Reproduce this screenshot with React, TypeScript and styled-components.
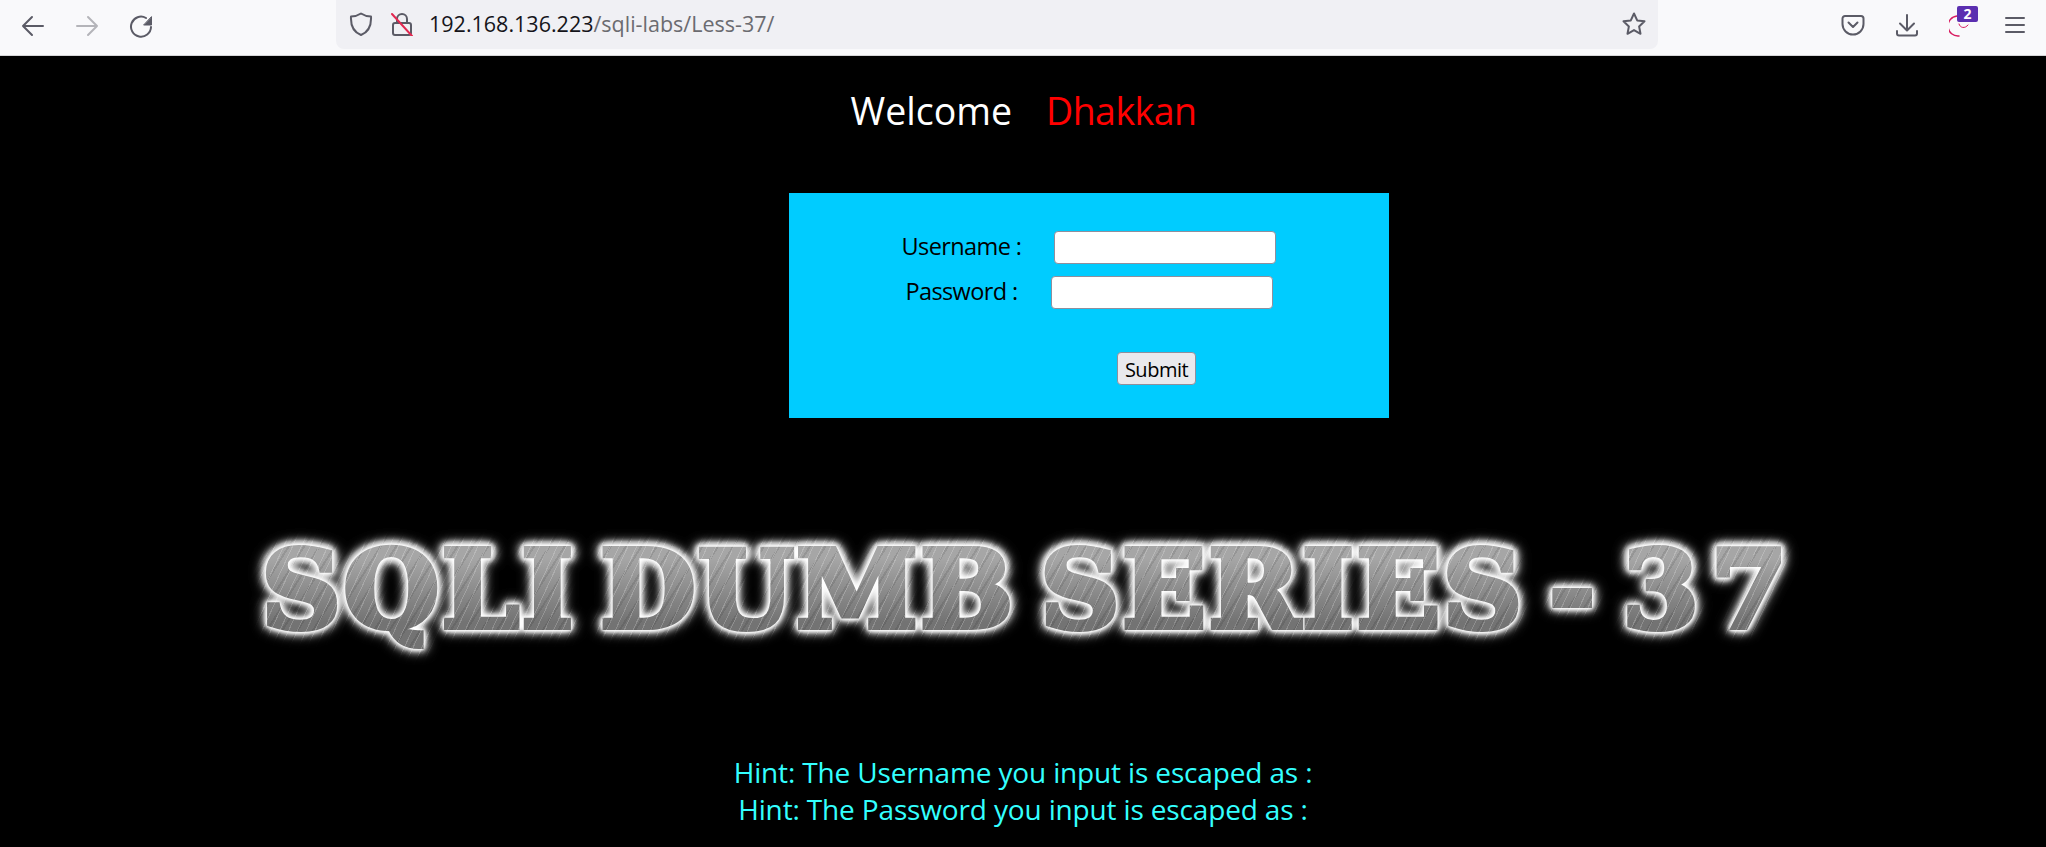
import React from "react";
import styled, { createGlobalStyle } from "styled-components";

const GlobalStyle = createGlobalStyle`
  html, body {
    margin: 0;
    background: #000;
    font-family: "Open Sans", "Noto Sans", sans-serif;
  }
`;

const Page = styled.div`
  width: 2046px;
  height: 847px;
  overflow: hidden;
  display: flex;
  flex-direction: column;
  background: #000;
`;

const Toolbar = styled.header`
  height: 55px;
  flex: none;
  display: flex;
  align-items: flex-start;
  background: #f9f9fb;
  border-bottom: 1px solid #d6d6d8;
`;

const NavGroup = styled.nav`
  width: 336px;
  height: 52px;
  display: flex;
  align-items: center;
  padding-left: 21px;
  gap: 30px;
  box-sizing: border-box;
`;

const UrlBar = styled.div`
  width: 1322px;
  height: 49px;
  flex: none;
  display: flex;
  align-items: center;
  box-sizing: border-box;
  padding: 0 12px 2px 13px;
  background: #f0f0f4;
  border-radius: 0 0 8px 8px;
`;

const LockSlot = styled.span`
  margin-left: 17px;
  display: inline-flex;
`;

const UrlText = styled.div`
  margin-left: 15px;
  flex: 1;
  font-size: 21.5px;
  color: #15141a;
  white-space: nowrap;
`;

const UrlPath = styled.span`
  color: #6b6b70;
`;

const ActionGroup = styled.div`
  flex: 1;
  height: 50px;
  display: flex;
  align-items: center;
  padding-left: 183px;
  gap: 30px;
`;

const IconBox = styled.span`
  position: relative;
  display: inline-flex;
  width: 24px;
  height: 24px;
  flex: none;
`;

const Badge = styled.span`
  position: absolute;
  left: 8px;
  top: -7px;
  width: 21px;
  height: 16px;
  background: #5b2fb0;
  border-radius: 2px;
  color: #fff;
  font-size: 14px;
  font-weight: 700;
  line-height: 16px;
  text-align: center;
`;

const Content = styled.main`
  flex: 1;
  display: flex;
  flex-direction: column;
  align-items: center;
`;

const Welcome = styled.div`
  margin: 30px 0 0 1px;
  display: flex;
  gap: 34px;
  font-size: 37.5px;
  line-height: 50px;
`;

const WelcomeWord = styled.span<{ $tone: string; $tight?: boolean }>`
  color: ${(props) => props.$tone};
  letter-spacing: ${(props) => (props.$tight ? "-0.55px" : "0")};
`;

const LoginBox = styled.form`
  margin: 57px 0 0 132px;
  width: 600px;
  height: 225px;
  box-sizing: border-box;
  padding-top: 38px;
  background: #00ccff;
  display: flex;
  flex-direction: column;
`;

const FieldRow = styled.div`
  height: 33px;
  margin-bottom: 12px;
  display: flex;
  justify-content: center;
  align-items: center;
  gap: 33px;
`;

const FieldLabel = styled.label`
  font-size: 23.5px;
  letter-spacing: -0.6px;
  padding-bottom: 3px;
  color: #000;
`;

const TextInput = styled.input`
  width: 222px;
  height: 33px;
  box-sizing: border-box;
  background: #fff;
  border: 1px solid #8f8f9d;
  border-radius: 4px;
  padding: 0;
`;

const SubmitRow = styled.div`
  margin-top: 31px;
  padding-left: 328px;
`;

const SubmitButton = styled.button`
  width: 79px;
  height: 33px;
  padding: 2px 0 0;
  background: #e9e9ed;
  border: 1px solid #8f8f9d;
  border-radius: 4px;
  color: #000;
  font-family: inherit;
  font-size: 20px;
  letter-spacing: -0.5px;
`;

const TitleFrame = styled.div`
  position: relative;
  isolation: isolate;
  background: #000;
  margin-top: 92px;
  width: 1640px;
  height: 160px;
  display: flex;
  justify-content: center;
  align-items: center;

  /* brushed-metal hatch, overlay leaves the black page and white glow alone */
  &::after {
    content: "";
    position: absolute;
    inset: 0;
    pointer-events: none;
    mix-blend-mode: overlay;
    background-image:
      repeating-linear-gradient(115deg, rgba(255, 255, 255, 0.2) 0 1px, transparent 1px 8px),
      repeating-linear-gradient(122deg, rgba(0, 0, 0, 0.1) 0 2px, transparent 2px 13px),
      linear-gradient(#a6a6a6 30%, #727272 70%);
  }
`;

const Title = styled.h1`
  margin: 0 0 0 6px;
  height: 116px;
  white-space: nowrap;
  font-family: "DejaVu Serif", serif;
  font-weight: 700;
  font-size: 106px;
  line-height: 116px;
  letter-spacing: 3px;
  word-spacing: -16px;
  color: #808080;
  -webkit-text-stroke: 6px #808080;
  transform: scaleX(1.03);
  filter: drop-shadow(0 0 1px #fff) drop-shadow(0 0 2px #fff) drop-shadow(0 0 3px #fff) drop-shadow(0 0 5px #fff);
`;

const Digit = styled.span`
  letter-spacing: 12px;
`;

const Hints = styled.div`
  margin-top: 84px;
  font-size: 28px;
  line-height: 37px;
  letter-spacing: -0.15px;
  color: #33ffff;
  text-align: center;
`;

const stroke = { fill: "none", stroke: "#5b5b66", strokeWidth: 2, strokeLinecap: "round", strokeLinejoin: "round" } as const;

const BackIcon = () => (
  <IconBox>
    <svg width="24" height="24" viewBox="0 0 24 24" {...stroke}>
      <path d="M22 12H2M11 3l-9 9 9 9" />
    </svg>
  </IconBox>
);

const ForwardIcon = () => (
  <IconBox>
    <svg width="24" height="24" viewBox="0 0 24 24" {...stroke} stroke="#b4b4b9">
      <path d="M2 12h20M13 3l9 9-9 9" />
    </svg>
  </IconBox>
);

const ReloadIcon = () => (
  <IconBox>
    <svg width="24" height="24" viewBox="0 0 24 24" {...stroke}>
      <path d="M17 4A10 10 0 1 0 22 13" />
      <path d="M22.500 3v8h-7.500z" fill="#5b5b66" strokeWidth="1" />
    </svg>
  </IconBox>
);

const ShieldIcon = () => (
  <IconBox>
    <svg width="24" height="24" viewBox="0 0 24 24" {...stroke}>
      <path d="M12 1.500c3 2 6.500 3 10 3 .5 9-2.500 15.500-10 18.500C4.500 20 1.500 13.500 2 4.500c3.500 0 7-1 10-3z" />
    </svg>
  </IconBox>
);

const LockIcon = () => (
  <IconBox>
    <svg width="24" height="24" viewBox="0 0 24 24" {...stroke}>
      <path d="M7 11V7a5 5 0 0 1 10 0v4" />
      <rect x="3" y="11" width="18" height="12" rx="2" />
      <path d="M2 2l20 22" stroke="#e22850" />
    </svg>
  </IconBox>
);

const StarIcon = () => (
  <IconBox>
    <svg width="24" height="24" viewBox="0 0 24 24" {...stroke}>
      <path d="M12 1.500l3.200 6.900 7.300.9-5.400 5.100 1.400 7.400-6.500-3.700-6.500 3.700 1.400-7.400L1.500 9.300l7.300-.9z" />
    </svg>
  </IconBox>
);

const PocketIcon = () => (
  <IconBox>
    <svg width="24" height="24" viewBox="0 0 24 24" {...stroke}>
      <path d="M4 3h16a2.500 2.500 0 0 1 2.500 2.500V11a10.500 10.500 0 0 1-21 0V5.500A2.500 2.500 0 0 1 4 3z" />
      <path d="M7.500 9.500l4.500 4.500 4.500-4.500" />
    </svg>
  </IconBox>
);

const DownloadIcon = () => (
  <IconBox>
    <svg width="24" height="24" viewBox="0 0 24 24" {...stroke}>
      <path d="M12 2v15M5 10.500l7 7 7-7M2 18v2.500A2 2 0 0 0 4 22.500h16a2 2 0 0 0 2-2V18" />
    </svg>
  </IconBox>
);

const ExtensionIcon = () => (
  <IconBox>
    <svg width="24" height="24" viewBox="0 0 24 24" fill="none" stroke="#d81b60" strokeWidth="1.500" strokeLinecap="round">
      <path d="M8 3A10 10 0 0 0 10 23" />
      <path d="M10 11c1 4 6 5 9 1" strokeWidth="1" />
    </svg>
    <Badge>2</Badge>
  </IconBox>
);

const MenuIcon = () => (
  <IconBox>
    <svg width="24" height="24" viewBox="0 0 24 24" {...stroke}>
      <path d="M3 5h18M3 12h18M3 19h18" />
    </svg>
  </IconBox>
);

export default function App() {
  return (
    <>
      <GlobalStyle />
      <Page>
        <Toolbar>
          <NavGroup>
            <BackIcon />
            <ForwardIcon />
            <ReloadIcon />
          </NavGroup>
          <UrlBar>
            <ShieldIcon />
            <LockSlot>
              <LockIcon />
            </LockSlot>
            <UrlText>
              192.168.136.223<UrlPath>/sqli-labs/Less-37/</UrlPath>
            </UrlText>
            <StarIcon />
          </UrlBar>
          <ActionGroup>
            <PocketIcon />
            <DownloadIcon />
            <ExtensionIcon />
            <MenuIcon />
          </ActionGroup>
        </Toolbar>
        <Content>
          <Welcome>
            <WelcomeWord $tone="#ffffff">Welcome</WelcomeWord>
            <WelcomeWord $tone="#ff0000" $tight>
              Dhakkan
            </WelcomeWord>
          </Welcome>
          <LoginBox>
            <FieldRow>
              <FieldLabel>Username :</FieldLabel>
              <TextInput type="text" />
            </FieldRow>
            <FieldRow>
              <FieldLabel>Password :</FieldLabel>
              <TextInput type="password" />
            </FieldRow>
            <SubmitRow>
              <SubmitButton type="button">Submit</SubmitButton>
            </SubmitRow>
          </LoginBox>
          <TitleFrame>
            <Title>
              SQLI DUMB SERIES - <Digit>3</Digit>7
            </Title>
          </TitleFrame>
          <Hints>
            Hint: The Username you input is escaped as :
            <br />
            Hint: The Password you input is escaped as :
          </Hints>
        </Content>
      </Page>
    </>
  );
}
